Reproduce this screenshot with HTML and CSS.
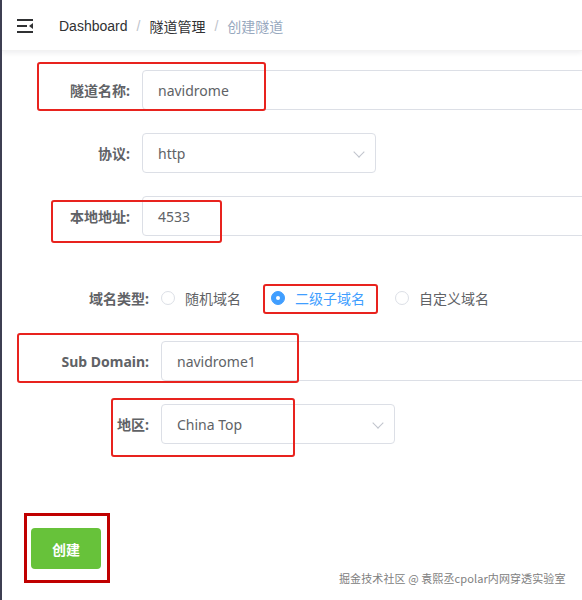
FILE: index.html
```html
<!DOCTYPE html>
<html lang="zh">
<head>
<meta charset="utf-8">
<title>创建隧道</title>
<link rel="stylesheet" href="styles.css">
</head>
<body>
<div class="app">
  <header class="navbar">
    <span class="hamburger">
      <svg width="16" height="16" viewBox="0 0 16 16"><rect x="0" y="1" width="16" height="2" fill="#303133"/><rect x="0" y="7" width="10" height="2" fill="#303133"/><path d="M16 5 L12 8 L16 11 Z" fill="#303133"/><rect x="0" y="13" width="16" height="2" fill="#303133"/></svg>
    </span>
    <nav class="breadcrumb">
      <span class="crumb">Dashboard</span><span class="sep">/</span>
      <span class="crumb">隧道管理</span><span class="sep">/</span>
      <span class="crumb current">创建隧道</span>
    </nav>
  </header>

  <main class="main">
    <form class="form form-a">
      <div class="item"><label class="label">隧道名称:</label><div class="control"><div class="input wide">navidrome</div></div></div>
      <div class="item"><label class="label">协议:</label><div class="control"><div class="input select">http<span class="chev"></span></div></div></div>
      <div class="item"><label class="label">本地地址:</label><div class="control"><div class="input wide">4533</div></div></div>
    </form>
    <form class="form form-b">
      <div class="item"><label class="label">域名类型:</label>
        <div class="control radios">
          <span class="radio"><span class="dot"></span>随机域名</span>
          <span class="radio on"><span class="dot"></span>二级子域名</span>
          <span class="radio"><span class="dot"></span>自定义域名</span>
        </div>
      </div>
      <div class="item"><label class="label latin">Sub Domain:</label><div class="control"><div class="input wide">navidrome1</div></div></div>
      <div class="item"><label class="label">地区:</label><div class="control"><div class="input select">China Top<span class="chev"></span></div></div></div>
    </form>
    <div class="actions"><button type="button" class="btn">创建</button></div>
  </main>

  <div class="mark m1"></div>
  <div class="mark m2"></div>
  <div class="mark m3"></div>
  <div class="mark m4"></div>
  <div class="mark m5"></div>
  <div class="mark-btn"></div>
  <div class="watermark">掘金技术社区 @ 袁熙丞cpolar内网穿透实验室</div>
</div>
</body>
</html>
```
FILE: styles.css
```css
html, body { margin: 0; padding: 0; background: #fff; overflow: hidden; }
body { font-family: "Noto Sans", "Noto Sans CJK SC", sans-serif; color: #606266; }
.app { position: relative; width: 582px; height: 600px; border-left: 2px solid #3e3f52; box-sizing: border-box; overflow: hidden; }

.navbar { height: 51px; padding-top: 1px; display: flex; align-items: center; box-shadow: 0 2px 5px rgba(0,21,41,.07); border-bottom: 1px solid #f2f2f2; box-sizing: border-box; }
.hamburger { display: flex; align-items: center; padding-left: 15px; }
.hamburger svg { display: block; }
.breadcrumb { margin-left: 26px; font-family: "Liberation Sans", "Noto Sans CJK SC", sans-serif; font-size: 14px; color: #303133; display: flex; align-items: center; }
.sep { color: #c0c4cc; margin: 0 9px; }
.current { color: #97a8be; }

.main { padding-left: 29px; }
.form { margin-left: 10px; }
.form-a { padding-top: 19px; }
.form-b { padding-top: 42px; }
.item { display: flex; align-items: center; height: 40px; margin-bottom: 23px; }
.form .item:last-child { margin-bottom: 0; }
.label { flex: none; box-sizing: border-box; text-align: right; padding-right: 12px; font-size: 14px; font-weight: 700; color: #606266; }
.form-a .label { width: 101px; }
.form-b .label { width: 120px; }
.control { flex: none; display: flex; align-items: center; }

.input { box-sizing: border-box; height: 40px; border: 1px solid #dcdfe6; border-radius: 4px; padding: 0 15px; display: flex; align-items: center; font-size: 14px; color: #606266; position: relative; }
.wide { width: 520px; }
.select { width: 234px; }
.chev { position: absolute; right: 12px; top: 14px; width: 7px; height: 7px; border-right: 1px solid #c0c4cc; border-bottom: 1px solid #c0c4cc; transform: rotate(45deg); }

.radios { font-size: 14px; }
.radio { display: inline-flex; align-items: center; margin-right: 30px; color: #606266; }
.dot { width: 14px; height: 14px; box-sizing: border-box; border: 1px solid #dcdfe6; border-radius: 50%; margin-right: 10px; background: #fff; position: relative; }
.radio.on { color: #409eff; }
.radio.on .dot { border-color: #409eff; background: #409eff; }
.radio.on .dot::after { content: ""; position: absolute; left: 4px; top: 4px; width: 4px; height: 4px; border-radius: 50%; background: #fff; }

.actions { padding-top: 84px; }
.btn { width: 70px; height: 41px; border: none; border-radius: 4px; background: #67c23a; color: #fff; font-family: "Noto Sans CJK SC", sans-serif; font-size: 14px; font-weight: 700; padding: 0; }

.mark { position: absolute; border: 2px solid #e8231e; border-radius: 3px; box-sizing: border-box; }
.m1 { left: 35px; top: 62px; width: 229px; height: 49px; }
.m2 { left: 49px; top: 200px; width: 171px; height: 43px; }
.m3 { left: 261px; top: 284px; width: 115px; height: 30px; }
.m4 { left: 15px; top: 333px; width: 282px; height: 50px; }
.m5 { left: 109px; top: 398px; width: 184px; height: 59px; }
.mark-btn { position: absolute; left: 22px; top: 513px; width: 86px; height: 70px; border: 3px solid #c00000; box-sizing: border-box; }

.watermark { position: absolute; left: 337px; top: 570px; font-family: "Noto Sans CJK SC", sans-serif; font-size: 11px; letter-spacing: 0.1px; color: #808080; white-space: nowrap; text-shadow: 0 0 1px #fff; }
```
